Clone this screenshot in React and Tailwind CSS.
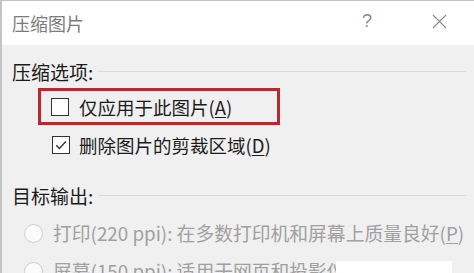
import React from "react";

const font = { fontFamily: '"Noto Sans CJK SC", "Noto Sans", sans-serif' };

function CheckBox({ checked }) {
  return (
    <div className="w-[18px] h-[18px] border-[1.5px] border-[#333] bg-white flex items-center justify-center shrink-0">
      {checked && (
        <svg width="14" height="14" viewBox="0 0 14 14" fill="none">
          <polyline points="2.2,7.2 5.4,10.4 11.8,3.6" stroke="#333" strokeWidth="1.4" />
        </svg>
      )}
    </div>
  );
}

function Radio() {
  return <div className="w-[19px] h-[19px] rounded-full border border-[#cfcfcf] bg-[#fbfbfb] shrink-0" />;
}

function GroupHeader({ children }) {
  return (
    <div className="flex items-center h-[24px] pr-[8px]">
      <span className="text-[19px] text-[#1c1c1c] leading-[24px]">{children}</span>
      <div className="flex-1 h-px bg-[#d9d9d9] ml-[5px] mt-[-2px]" />
    </div>
  );
}

export default function App() {
  return (
    <div style={font} className="relative w-[474px] h-[273px] overflow-hidden bg-[#f0f0f0] border-l-2 border-t border-[#c4c4c4]">
      <div className="h-[44px] bg-white flex items-center pl-[10px] pr-[27px]">
        <span className="text-[18px] text-[#7c7c7c] leading-[24px]">压缩图片</span>
        <div className="flex-1" />
        <span className="text-[18px] text-[#8a8a8a] leading-[24px] mt-[-4px] mr-[60px]" style={{ fontFamily: '"Liberation Sans", sans-serif', fontWeight: 300 }}>?</span>
        <svg width="15" height="15" viewBox="0 0 15 15" className="mt-[-3px]">
          <path d="M1 1L14 14M14 1L1 14" stroke="#8a8a8a" strokeWidth="1.1" />
        </svg>
      </div>
      <div className="pl-[10px] pt-[15px]">
        <GroupHeader>压缩选项:</GroupHeader>
        <div className="ml-[26px] mt-[4px] w-[242px] h-[37px] border-[3px] border-[#b8282c] flex items-center pl-[10px] gap-[10px]">
          <CheckBox />
          <span className="text-[18.5px] text-[#1c1c1c] leading-[24px]">
            仅应用于此图片(<span className="underline underline-offset-2">A</span>)
          </span>
        </div>
        <div className="ml-[40px] mt-[8px] h-[24px] flex items-center gap-[9px]">
          <CheckBox checked />
          <span className="text-[18.5px] text-[#1c1c1c] leading-[24px]">
            删除图片的剪裁区域(<span className="underline underline-offset-2">D</span>)
          </span>
        </div>
        <div className="mt-[27px]">
          <GroupHeader>目标输出:</GroupHeader>
        </div>
        <div className="ml-[12px] mt-[13px] h-[24px] flex items-center gap-[10px]">
          <Radio />
          <span className="text-[18.8px] text-[#a0a0a0] leading-[24px] whitespace-nowrap">
            打印(220 ppi): 在多数打印机和屏幕上质量良好(<span className="underline underline-offset-2">P</span>)
          </span>
        </div>
        <div className="ml-[12px] mt-[14px] h-[24px] flex items-center gap-[10px]">
          <Radio />
          <span className="text-[18.8px] text-[#a0a0a0] leading-[24px] whitespace-nowrap">
            屏幕(150 ppi): 适用于网页和投影仪(<span className="underline underline-offset-2">S</span>)
          </span>
        </div>
      </div>
      <div className="absolute left-[334px] top-[260px] w-[116px] h-[14px] bg-white" />
    </div>
  );
}
